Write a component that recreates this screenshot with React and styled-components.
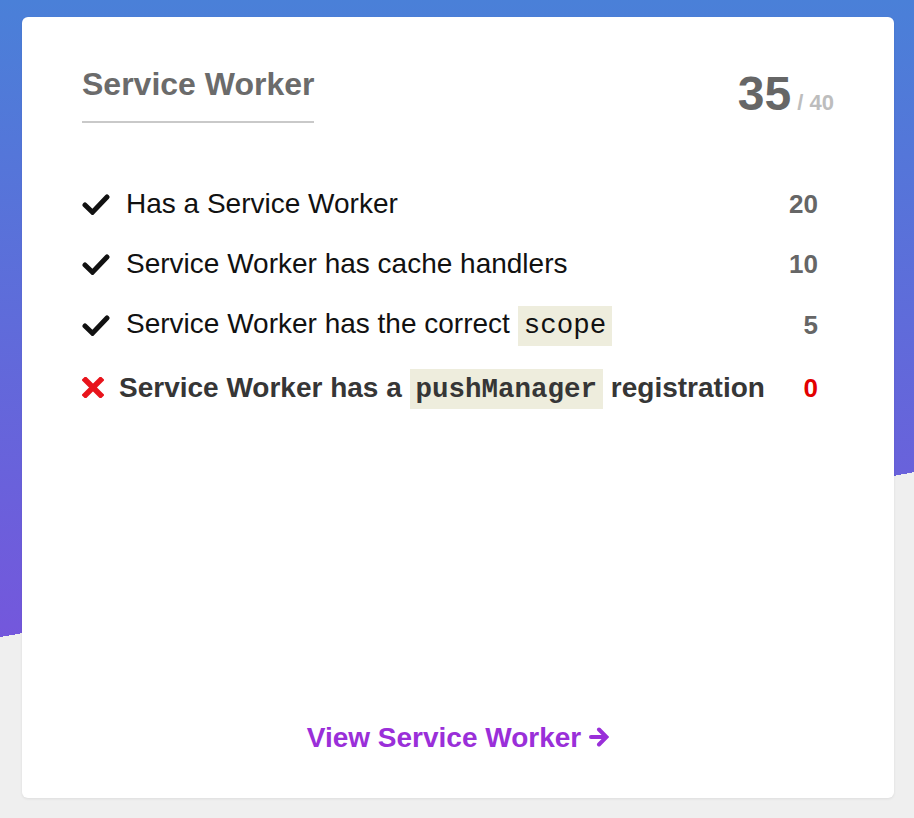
import React from "react";
import styled, { createGlobalStyle } from "styled-components";

const GlobalStyle = createGlobalStyle`
  html, body {
    margin: 0;
    padding: 0;
  }
  body {
    font-family: "Liberation Sans", Arial, sans-serif;
  }
  * { box-sizing: border-box; }
`;

const Page = styled.div`
  width: 100%;
  height: 100vh;
  min-height: 818px;
  display: flex;
  padding: 17px 20px 20px 22px;
  background:
    linear-gradient(169.77deg, transparent 627px, #efefef 627px),
    linear-gradient(180deg, #4a80d8 0px, #7457dc 640px);
`;

const Card = styled.section`
  flex: 1;
  display: flex;
  flex-direction: column;
  background: #ffffff;
  border-radius: 6px;
  box-shadow: 0 1px 3px rgba(0, 0, 0, 0.08);
  padding: 51px 60px 44px 60px;
`;

const Header = styled.header`
  display: flex;
  justify-content: space-between;
  align-items: flex-start;
`;

const Title = styled.h2`
  margin: 0;
  font-size: 32px;
  line-height: 32px;
  font-weight: 700;
  color: #6b6b6b;
  padding-bottom: 21px;
  border-bottom: 2px solid #c9c9c9;
`;

const Score = styled.div`
  margin-top: 2px;
  font-size: 48px;
  line-height: 48px;
  font-weight: 700;
  color: #666666;
`;

const Out = styled.span`
  font-size: 22px;
  color: #bdbdbd;
`;

const List = styled.ul`
  list-style: none;
  margin: 57px 0 0 0;
  padding: 0 16px 0 0;
  display: flex;
  flex-direction: column;
  gap: 20px;
`;

const Row = styled.li`
  display: flex;
  align-items: center;
  min-height: 40px;
  margin-top: ${(p) => (p.$fail ? "2px" : "0")};
  font-size: 28px;
  font-weight: ${(p) => (p.$fail ? 700 : 400)};
  color: ${(p) => (p.$fail ? "#363636" : "#111111")};
`;

const IconBox = styled.span`
  flex: none;
  display: flex;
  align-items: center;
  width: ${(p) => p.$w}px;
  margin-right: ${(p) => p.$gap}px;
  margin-top: ${(p) => p.$dy || 0}px;
`;

const Label = styled.span`
  flex: 1;
  line-height: 40px;
`;

const Code = styled.code`
  display: inline-block;
  font-family: "Liberation Mono", "Courier New", monospace;
  font-size: 27.5px;
  line-height: normal;
  padding: 4.5px 6px;
  background: #eeeddd;
  color: inherit;
  font-weight: inherit;
`;

const Points = styled.span`
  flex: none;
  font-size: 26px;
  line-height: 40px;
  font-weight: 700;
  color: ${(p) => (p.$fail ? "#e30000" : "#666666")};
`;

const Footer = styled.footer`
  margin-top: auto;
  display: flex;
  justify-content: center;
`;

const Link = styled.a`
  display: inline-flex;
  align-items: center;
  font-size: 28px;
  line-height: 32px;
  font-weight: 700;
  color: #9a2fd9;
  text-decoration: none;
`;

const ArrowBox = styled.span`
  display: flex;
  margin-left: 8px;
  margin-top: -3px;
`;

const Check = () => (
  <svg width="28" height="22" viewBox="0 0 28 22" aria-hidden="true">
    <path
      d="M3 12 L10.5 19.2 L25 4"
      fill="none"
      stroke="#111"
      strokeWidth="5"
      strokeLinecap="round"
      strokeLinejoin="miter"
    />
  </svg>
);

const Cross = () => (
  <svg width="22" height="21" viewBox="0 0 22 21" aria-hidden="true">
    <path
      d="M3.5 3 L18.5 18 M18.5 3 L3.5 18"
      fill="none"
      stroke="#e8141c"
      strokeWidth="5.5"
      strokeLinecap="square"
    />
  </svg>
);

const Arrow = () => (
  <svg width="20" height="20" viewBox="0 0 20 20" aria-hidden="true">
    <path
      d="M2 10 H17 M10 2.5 L17.5 10 L10 17.5"
      fill="none"
      stroke="#9a2fd9"
      strokeWidth="4"
      strokeLinecap="round"
      strokeLinejoin="miter"
    />
  </svg>
);

const items = [
  { ok: true, label: <>Has a Service Worker</>, points: 20 },
  { ok: true, label: <>Service Worker has cache handlers</>, points: 10 },
  {
    ok: true,
    label: (
      <>
        Service Worker has the correct <Code>scope</Code>
      </>
    ),
    points: 5,
  },
  {
    ok: false,
    label: (
      <>
        Service Worker has a <Code>pushManager</Code> registration
      </>
    ),
    points: 0,
  },
];

export default function App() {
  return (
    <>
      <GlobalStyle />
      <Page>
        <Card>
          <Header>
            <Title>Service Worker</Title>
            <Score>
              35<Out> / 40</Out>
            </Score>
          </Header>
          <List>
            {items.map((it, i) => (
              <Row key={i} $fail={!it.ok}>
                {it.ok ? (
                  <IconBox $w={28} $gap={16}>
                    <Check />
                  </IconBox>
                ) : (
                  <IconBox $w={22} $gap={15} $dy={-2}>
                    <Cross />
                  </IconBox>
                )}
                <Label>{it.label}</Label>
                <Points $fail={!it.ok}>{it.points}</Points>
              </Row>
            ))}
          </List>
          <Footer>
            <Link href="#">
              View Service Worker
              <ArrowBox>
                <Arrow />
              </ArrowBox>
            </Link>
          </Footer>
        </Card>
      </Page>
    </>
  );
}
